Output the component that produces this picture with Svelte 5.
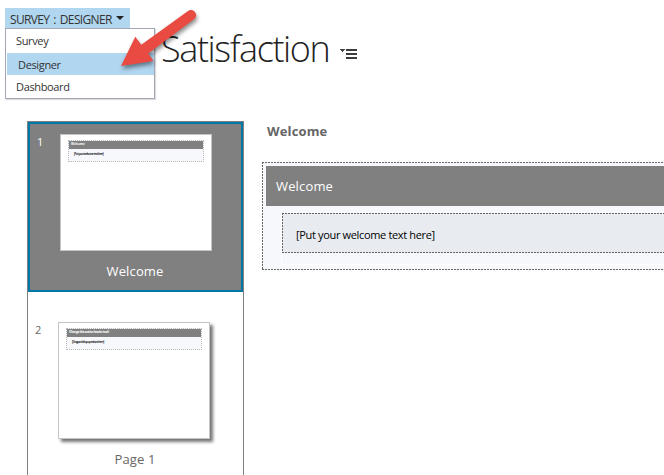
<script>
  const menu = [
    { label: 'Survey' },
    { label: 'Designer', active: true },
    { label: 'Dashboard' }
  ];
  const pages = [
    { n: 1, name: 'Welcome', head: 'Welcome', body: '[Put your welcome text here]', active: true },
    { n: 2, name: 'Page 1', head: '[Change this section header text]', body: '[Drag and drop questions here]' }
  ];
</script>

<div class="app">
  <header>
    <div class="nav">
      <button class="tab"><span>SURVEY : DESIGNER</span><i></i></button>
      <ul class="menu">
        {#each menu as item}
          <li class:active={item.active}>{item.label}</li>
        {/each}
      </ul>
    </div>
    <h1>Satisfaction</h1>
    <svg class="options" width="18" height="12" viewBox="0 0 18 12" shape-rendering="crispEdges">
      <path d="M0 1h5v1H4v1H3v1H2V3H1V2H0z" fill="#444" />
      <path d="M6 1h11v2H6zM6 5h11v2H6zM6 9h11v2H6z" fill="#3c3c3c" />
    </svg>
    <svg class="arrow" width="96" height="76" viewBox="110 2 96 76">
      <path d="M121 66L135.300 36.700L141.300 44.700L188 11A5 5 0 0 1 194 19.300L148.200 53.500L153.500 61Z" fill="#e94b43" />
    </svg>
  </header>
  <main>
    <aside>
      {#each pages as page}
        <section class="page" class:selected={page.active}>
          <span class="num">{page.n}</span>
          <div class="thumb">
            <div class="mini">
              <div class="mini-head">{page.head}</div>
              <div class="mini-body">{page.body}</div>
            </div>
          </div>
          <div class="name">{page.name}</div>
        </section>
      {/each}
    </aside>
    <article>
      <h2>Welcome</h2>
      <div class="frame dashed">
        <div class="bar">Welcome</div>
        <div class="content">
          <div class="field dashed">[Put your welcome text here]</div>
        </div>
      </div>
    </article>
  </main>
</div>

<style>
  * { box-sizing: border-box; }
  :global(body) { margin: 0; background: #fff; overflow: hidden; }
  .app { width: 664px; height: 475px; overflow: hidden; font-family: "Open Sans", "Noto Sans", sans-serif; color: #222; }
  header { position: relative; height: 121px; display: flex; align-items: flex-start; padding: 8px 0 0 5px; }
  .nav { width: 150px; flex: none; }
  .tab { display: flex; align-items: center; width: 125px; height: 20px; padding: 2px 0 0 5px; border: 0; background: #b1d6f0; font: 12px "Open Sans", sans-serif; letter-spacing: -0.65px; word-spacing: 1.5px; color: #333; white-space: nowrap; }
  .tab span { width: 106px; text-align: left; }
  .tab i { border: 4px solid transparent; border-top: 4px solid #222; border-bottom: 0; margin-top: -3px; }
  .menu { list-style: none; margin: 0; padding: 1px 0 0 1px; width: 150px; height: 71px; border: 1px solid #a3a7b5; background: #fff; box-shadow: 1px 1px 1px #ddd; font-size: 11px; letter-spacing: -0.35px; color: #333; }
  .menu li { height: 23px; line-height: 22px; padding-left: 9px; }
  .menu .active { height: 22px; line-height: 23px; padding-left: 11px; background: #b1d6f0; }
  .menu li:last-child { line-height: 23px; }
  h1 { margin: 15px 0 0 6px; width: 179px; font-size: 36px; line-height: 52px; font-weight: 300; letter-spacing: -1.4px; }
  .options { margin-top: 40px; flex: none; }
  .arrow { position: absolute; left: 110px; top: 2px; filter: drop-shadow(1px 3px 2px rgba(0,0,0,.45)); }
  main { display: flex; padding-left: 27px; height: 354px; }
  aside { width: 217px; flex: none; border: 1px solid #808080; border-bottom: 0; }
  .page { display: flex; flex-wrap: wrap; align-content: flex-start; height: 170px; padding: 18px 0 0 7px; margin-top: 12px; color: #666; }
  .selected { margin: 0; padding: 10px 0 0 7px; background: #808080; border: 2px solid #0078a5; color: #fff; }
  .num { width: 23px; font-size: 11px; line-height: 15px; }
  .thumb { width: 152px; height: 117px; background: #fff; border: 1px solid #c4c4c4; padding: 5px 7px; box-shadow: 3px 3px 3px #777; }
  .selected .thumb { box-shadow: none; }
  .mini { width: 136px; height: 22px; background: #f6f8fb; border: 1px dotted #bbb; white-space: nowrap; }
  .mini-head { height: 8px; line-height: 7px; background: #808080; color: #fff; font-size: 3px; padding-left: 2px; font-weight: 700; letter-spacing: -0.3px; }
  .selected .mini-head { letter-spacing: 0; }
  .mini-body { font-size: 3px; line-height: 11px; padding-left: 5px; color: #000; font-weight: 600; letter-spacing: -0.45px; }
  .name { width: 100%; text-align: center; font-size: 13px; line-height: 18px; margin-top: 11px; padding-right: 8px; letter-spacing: .15px; }
  article { flex: 1; padding-left: 18px; min-width: 0; }
  h2 { margin: 0 0 0 5px; font-size: 13px; line-height: 20px; color: #666; font-weight: 700; letter-spacing: .15px; }
  .dashed {
    background-image:
      repeating-linear-gradient(90deg, #666 0 2px, transparent 2px 3px),
      repeating-linear-gradient(90deg, #666 0 2px, transparent 2px 3px),
      repeating-linear-gradient(#666 0 2px, transparent 2px 3px);
    background-size: 100% 1px, 100% 1px, 1px 100%;
    background-position: 0 0, 0 100%, 0 0;
    background-repeat: no-repeat;
  }
  .frame { height: 108px; margin-top: 21px; padding: 4px 0 0 4px; background-color: #f6f8fb; }
  .bar { height: 40px; line-height: 41px; padding-left: 10px; background: #808080; color: #fff; font-size: 13px; letter-spacing: .15px; }
  .content { height: 52px; margin: 7px 0 0 15px; border: solid #fff; border-width: 0 0 1px 1px; }
  .field { height: 40px; line-height: 44px; padding-left: 14px; background-color: #e8ecf1; color: #000; font-size: 11px; letter-spacing: -0.34px; }
</style>
